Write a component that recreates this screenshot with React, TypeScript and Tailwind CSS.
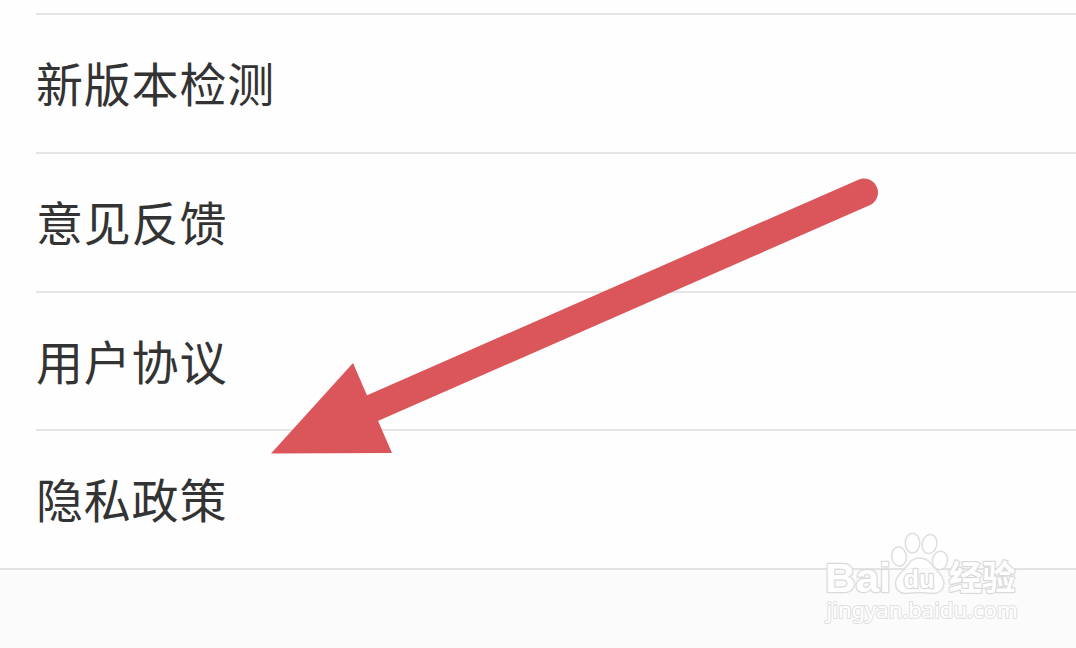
interface RowProps {
  label: string;
  className: string;
}

const ROWS: RowProps[] = [
  { label: '新版本检测', className: 'h-[139px] pb-1' },
  { label: '意见反馈', className: 'h-[139px] pb-1' },
  { label: '用户协议', className: 'h-[138px] pb-[3px]' },
  { label: '隐私政策', className: 'h-[139px] pb-1' },
];

function Row({ label, className }: RowProps) {
  return (
    <li className={`ml-9 flex items-center border-t-2 border-[#e5e5e5] ${className}`}>
      <span className="text-[47px] leading-none tracking-[0.8px] text-[#333333]">{label}</span>
    </li>
  );
}

function Arrow() {
  return (
    <svg className="absolute inset-0" width="1076" height="648" viewBox="0 0 1076 648">
      <line x1="350" y1="418" x2="864" y2="192.5" stroke="#db565b" strokeWidth="28" strokeLinecap="round" />
      <polygon points="271,453.5 353,363 392,453" fill="#db565b" />
    </svg>
  );
}

function Watermark() {
  return (
    <svg className="absolute top-[520px] left-[810px]" width="220" height="110" viewBox="0 0 220 110">
      {/* Paw */}
      <g fill="#ffffff" fillOpacity="0.7" stroke="#dedede" strokeWidth="1.5" strokeLinejoin="round">
        <ellipse cx="89" cy="36.5" rx="7.3" ry="9.7" transform="rotate(-8 89 36.5)" />
        <ellipse cx="102.5" cy="23" rx="7.3" ry="9.8" />
        <ellipse cx="119.5" cy="24" rx="7.3" ry="9.7" transform="rotate(12 119.5 24)" />
        <ellipse cx="130" cy="40.5" rx="7.6" ry="9.3" transform="rotate(8 130 40.5)" />
        <path d="M109 38c-7 0-10 5-13 9s-10.5 9-10.5 16c0 7 4.5 10.5 10 10.5 5 0 8-1 13.5-1s9 1 14 1c6 0 11-4 11-10.5 0-7-7-12-11-17s-7-8-14-8z" />
      </g>
      {/* Logo text */}
      <g fill="#ffffff" stroke="#dadada" strokeWidth="2.5" strokeLinejoin="round" paintOrder="stroke">
        <text x="15" y="71.5" fontSize="41" textLength="66" lengthAdjust="spacingAndGlyphs" className="font-['Liberation_Sans'] font-bold">Bai</text>
        <text x="93.5" y="67.5" fontSize="26" textLength="31" lengthAdjust="spacingAndGlyphs" className="font-['Liberation_Sans'] font-bold">du</text>
        <text x="138.5" y="69.5" fontSize="34" textLength="67" lengthAdjust="spacingAndGlyphs" className="font-['Noto_Sans_CJK_SC'] font-bold">经验</text>
      </g>
      <text x="16.5" y="98" fontSize="22" textLength="191" lengthAdjust="spacingAndGlyphs" fill="#ffffff" stroke="#e0e0e0" strokeWidth="2" strokeLinejoin="round" paintOrder="stroke" className="font-['Noto_Sans']">jingyan.baidu.com</text>
    </svg>
  );
}

export default function App() {
  return (
    <main className="relative flex h-[648px] w-[1076px] flex-col overflow-hidden bg-[#fefefe] font-['Noto_Sans_CJK_SC',sans-serif]">
      <ul className="pt-[13px]">
        {ROWS.map((row) => (
          <Row key={row.label} {...row} />
        ))}
      </ul>
      <div className="flex-1 border-t-2 border-[#e3e3e3] bg-[#fbfbfb]" />
      <Arrow />
      <Watermark />
    </main>
  );
}
